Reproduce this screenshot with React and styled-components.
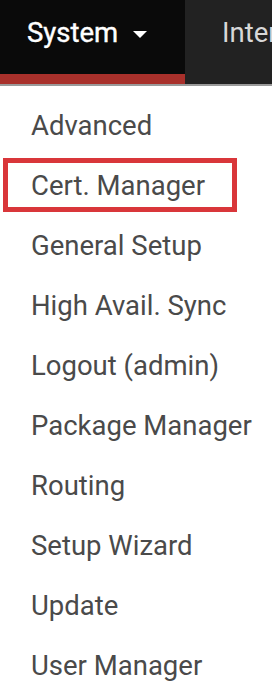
import React from "react"
import styled, { createGlobalStyle } from "styled-components"

const GlobalStyle = createGlobalStyle`
   html, body {
      margin: 0;
      padding: 0;
      background: #fff;
      font-family: Roboto, "Liberation Sans", sans-serif;
   }
`

const items = [
   "Advanced",
   "Cert. Manager",
   "General Setup",
   "High Avail. Sync",
   "Logout (admin)",
   "Package Manager",
   "Routing",
   "Setup Wizard",
   "Update",
   "User Manager",
]

const App = () => {
   return (
      <Page>
         <GlobalStyle />
         <NavBar>
            <Tab active>
               System <Caret />
            </Tab>
            <Tab>Interfaces</Tab>
         </NavBar>
         <Menu>
            {items.map(item => (
               <MenuItem key={item} highlighted={item === "Cert. Manager"}>
                  <span>{item}</span>
               </MenuItem>
            ))}
         </Menu>
         <Footer />
      </Page>
   )
}

const Page = styled.div`
   width: 272px;
   height: 694px;
   overflow: hidden;
   display: flex;
   flex-direction: column;
`

const NavBar = styled.div`
   display: flex;
   height: 84px;
   background-color: #222;
   border-bottom: 2px solid #9a9a9a;
   flex-shrink: 0;
`

const Tab = styled.div`
   display: flex;
   align-items: flex-start;
   box-sizing: border-box;
   height: 84px;
   padding: 17px 0 0 ${p => (p.active ? "27px" : "37px")};
   width: ${p => (p.active ? "185px" : "auto")};
   flex-shrink: 0;
   white-space: nowrap;
   font-size: 27.5px;
   line-height: 32px;
   color: ${p => (p.active ? "#fff" : "#d8d8d8")};
   background-color: ${p => (p.active ? "#0a0a0a" : "transparent")};
   border-bottom: ${p => (p.active ? "10px solid #a8302b" : "none")};
   -webkit-text-stroke: ${p => (p.active ? "0.4px #fff" : "0")};
`

const Caret = styled.span`
   display: inline-block;
   width: 0;
   height: 0;
   margin: 14px 0 0 15px;
   border-left: 7px solid transparent;
   border-right: 7px solid transparent;
   border-top: 7px solid #fff;
`

const Menu = styled.div`
   display: flex;
   flex-direction: column;
   padding-top: 10px;
`

const MenuItem = styled.div`
   position: relative;
   height: 60px;
   line-height: 60px;
   padding-left: 31px;
   font-size: 27.5px;
   color: #4a4a4a;
   white-space: nowrap;

   &::after {
      content: "";
      display: ${p => (p.highlighted ? "block" : "none")};
      position: absolute;
      left: 3px;
      top: 2px;
      width: 234px;
      height: 54px;
      box-sizing: border-box;
      border: 5px solid #d9363a;
   }
`

const Footer = styled.div`
   margin-top: auto;
   height: 4px;
   background: #f6f7f9;
`

export default App
